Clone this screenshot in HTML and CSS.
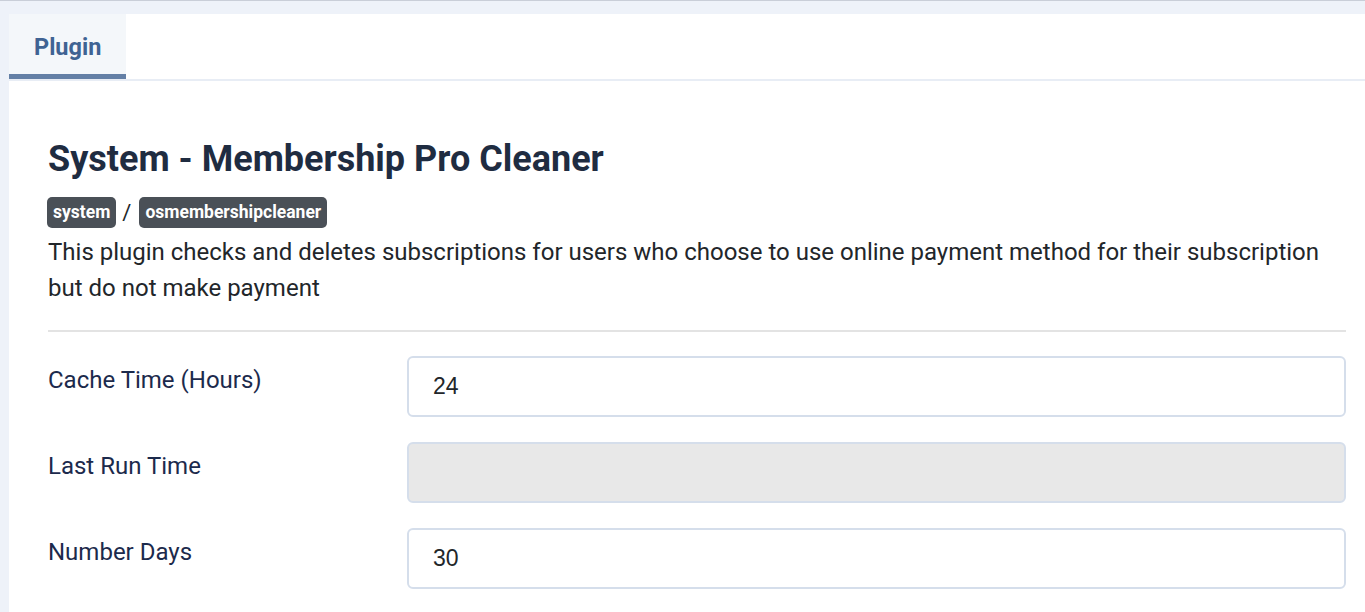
FILE: index.html
```html
<!DOCTYPE html>
<html lang="en">
<head>
<meta charset="utf-8">
<title>Plugin</title>
<link rel="stylesheet" href="styles.css">
</head>
<body>
<div class="page">
  <div class="card">
    <div class="tabs">
      <div class="tab active">Plugin</div>
    </div>
    <div class="content">
      <h1 class="title">System - Membership Pro Cleaner</h1>
      <div class="badges">
        <span class="badge">system</span>
        <span class="sep">/</span>
        <span class="badge">osmembershipcleaner</span>
      </div>
      <p class="desc">This plugin checks and deletes subscriptions for users who choose to use online payment method for their subscription but do not make payment</p>
      <hr class="rule">
      <div class="field">
        <label class="label">Cache Time (Hours)</label>
        <div class="control"><input class="input" type="text" value="24"></div>
      </div>
      <div class="field">
        <label class="label">Last Run Time</label>
        <div class="control"><input class="input readonly" type="text" value="" readonly></div>
      </div>
      <div class="field">
        <label class="label">Number Days</label>
        <div class="control"><input class="input" type="text" value="30"></div>
      </div>
    </div>
  </div>
</div>
</body>
</html>
```

FILE: styles.css
```css
html, body {
  margin: 0;
  padding: 0;
}
body {
  background: #eef2f9;
  font-family: Roboto, "Liberation Sans", Arial, sans-serif;
  border-top: 1px solid #c9ced8;
  overflow: hidden;
}
.page {
  padding: 13px 0 0 9px;
}
.card {
  background: #fff;
  min-height: 620px;
}
.tabs {
  display: flex;
  border-bottom: 2px solid #e8edf5;
  height: 65px;
}
.tab {
  display: flex;
  align-items: center;
  box-sizing: border-box;
  height: 65px;
  padding: 6px 25px 0;
  font-size: 23.5px;
  font-weight: 700;
  color: #3f6393;
  background: #f4f7fa;
  border-bottom: 5px solid #6480a6;
}
.content {
  padding: 57px 19px 0 39px;
}
.title {
  margin: 0;
  font-size: 36px;
  font-weight: 700;
  color: #1f2c41;
  line-height: 43px;
}
.badges {
  display: flex;
  align-items: center;
  margin-top: 16px;
  margin-left: -1px;
}
.badge {
  background: #4a5057;
  color: #fff;
  font-size: 17.5px;
  font-weight: 700;
  border-radius: 5px;
  height: 31px;
  line-height: 31px;
  padding: 0 6px;
}
.sep {
  font-size: 22px;
  color: #22262a;
  margin: 0 8px 0 6px;
}
.desc {
  margin: 6px 0 0;
  font-size: 24px;
  line-height: 36px;
  color: #22262a;
}
.rule {
  border: 0;
  border-top: 2px solid #e3e3e3;
  margin: 24px 0 24px;
}
.field {
  display: flex;
  margin-bottom: 25px;
}
.label {
  width: 359px;
  flex: none;
  font-size: 24px;
  line-height: 28px;
  color: #1c2a4c;
  padding-top: 10px;
}
.control {
  flex: 1;
}
.input {
  display: block;
  width: 100%;
  box-sizing: border-box;
  height: 61px;
  border: 2px solid #d5deeb;
  border-radius: 6px;
  padding: 0 24px;
  font-family: "Liberation Sans", Arial, sans-serif;
  font-size: 23px;
  color: #22262a;
  background: #fff;
  outline: none;
}
.input.readonly {
  background: #e8e8e8;
}
```
